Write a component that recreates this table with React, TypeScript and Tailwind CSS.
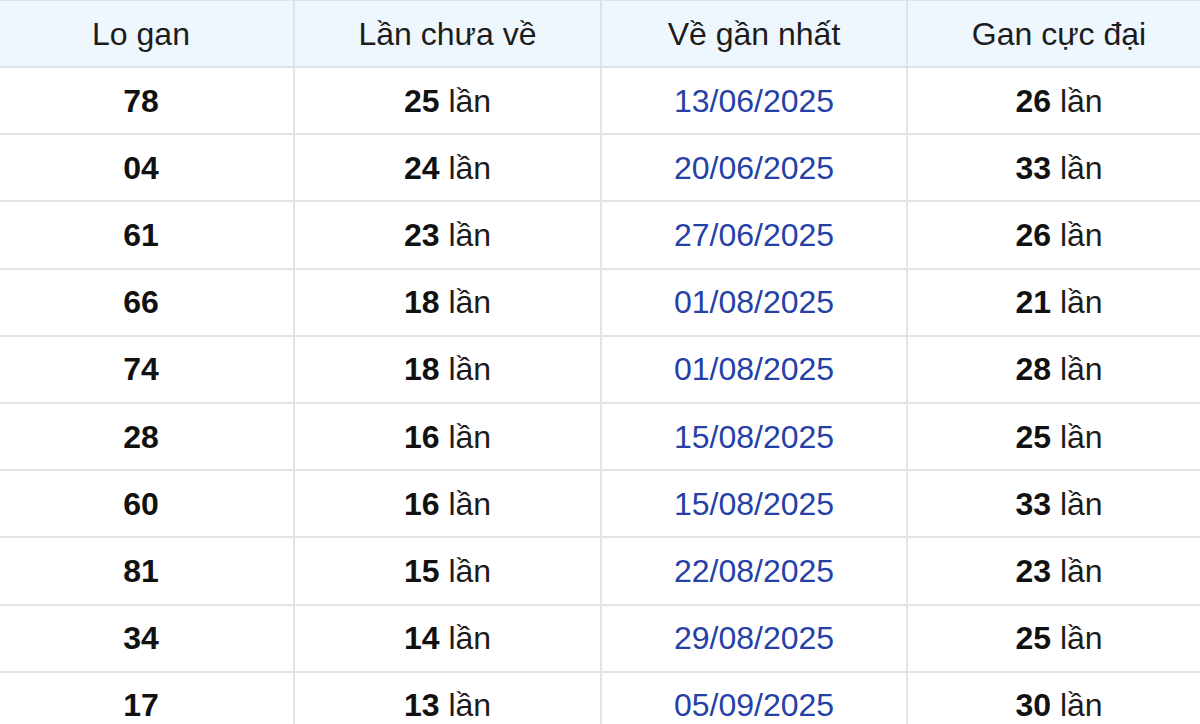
import React from "react";

type Row = {
  so: string;
  chua: number;
  ngay: string;
  max: number;
};

const rows: Row[] = [
  { so: "78", chua: 25, ngay: "13/06/2025", max: 26 },
  { so: "04", chua: 24, ngay: "20/06/2025", max: 33 },
  { so: "61", chua: 23, ngay: "27/06/2025", max: 26 },
  { so: "66", chua: 18, ngay: "01/08/2025", max: 21 },
  { so: "74", chua: 18, ngay: "01/08/2025", max: 28 },
  { so: "28", chua: 16, ngay: "15/08/2025", max: 25 },
  { so: "60", chua: 16, ngay: "15/08/2025", max: 33 },
  { so: "81", chua: 15, ngay: "22/08/2025", max: 23 },
  { so: "34", chua: 14, ngay: "29/08/2025", max: 25 },
  { so: "17", chua: 13, ngay: "05/09/2025", max: 30 },
];

// table is wider than the window: cropped a bit on both sides
const cols = "grid grid-cols-[304px_307px_306px_1fr]";

export default function App() {
  return (
    <div
      className="w-[1200px] h-[724px] overflow-hidden bg-white text-[32px] text-[#1c1c1c]"
      style={{ fontFamily: '"Liberation Sans", Arial, sans-serif' }}
    >
      <div className="ml-[-11px] w-[1221px] border-t border-[#dfe2e6]">
        {/* header */}
        <div className={`${cols} h-[67px] bg-[#eef6fe] border-b-2 border-[#dfe2e6]`}>
          <div className="flex items-center justify-center">Lo gan</div>
          <div className="flex items-center justify-center border-l-2 border-[#dfe2e6]">
            Lần chưa về
          </div>
          <div className="flex items-center justify-center border-l-2 border-[#dfe2e6]">
            Về gần nhất
          </div>
          <div className="flex items-center justify-center border-l-2 border-[#dfe2e6]">
            Gan cực đại
          </div>
        </div>

        {rows.map((r) => (
          <div
            key={r.so}
            className={`${cols} h-[67.2px] border-b-2 border-[#e3e4e6]`}
          >
            <div className="flex items-center justify-center font-bold text-[#111]">
              {r.so}
            </div>
            <div className="flex items-center justify-center border-l-2 border-[#e3e4e6]">
              <b className="text-[#111]">{r.chua}</b>&nbsp;lần
            </div>
            <div className="flex items-center justify-center border-l-2 border-[#e3e4e6] text-[#2541a6]">
              {r.ngay}
            </div>
            <div className="flex items-center justify-center border-l-2 border-[#e3e4e6]">
              <b className="text-[#111]">{r.max}</b>&nbsp;lần
            </div>
          </div>
        ))}
      </div>
    </div>
  );
}
